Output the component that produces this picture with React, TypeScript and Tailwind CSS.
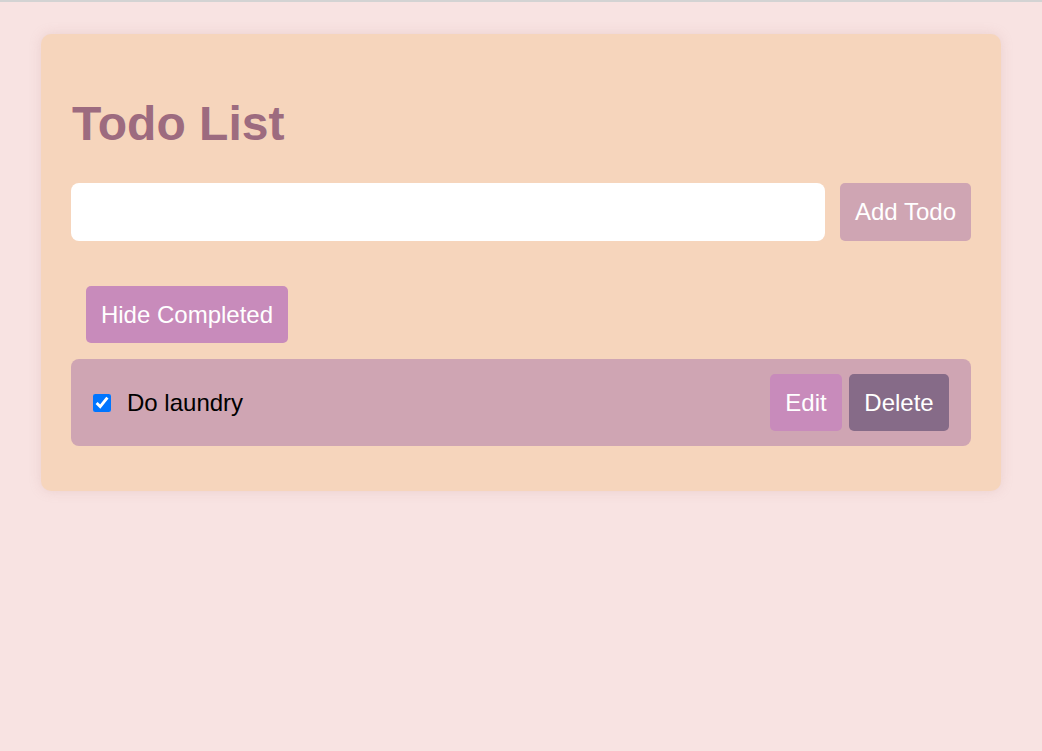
import React, { useState } from "react";

export default function App() {
  const [done, setDone] = useState(true);
  return (
    <div
      className="min-h-[751px] bg-[#f8e3e2] border-t-2 border-[#d3d3d3]"
      style={{ fontFamily: '"Liberation Sans", Arial, sans-serif' }}
    >
      <div className="pt-[32px]">
        <div className="max-w-[960px] mx-auto bg-[#f6d5bc] rounded-[10px] shadow-[0_0_12px_rgba(200,150,150,0.25)] px-[30px] pt-[30px] pb-[45px]">
          <h1 className="text-[48px] font-bold text-[#9d6b7f] leading-[55px] mt-[32px] mb-[32px] ml-[1px]">
            Todo List
          </h1>
          <div className="flex gap-[15px]">
            <input
              type="text"
              className="flex-1 h-[58px] bg-white rounded-[8px] outline-none px-3 text-[24px]"
            />
            <button className="h-[58px] w-[131px] bg-[#cfa5b3] text-white text-[24px] rounded-[5px]">
              Add Todo
            </button>
          </div>
          <div className="mt-[45px] ml-[15px] mb-[16px]">
            <button className="h-[57px] w-[202px] bg-[#c88bbb] text-white text-[24px] rounded-[5px]">
              Hide Completed
            </button>
          </div>
          <div className="flex items-center justify-between bg-[#cfa5b3] rounded-[8px] pl-[22px] pr-[22px] py-[15px]">
            <label className="flex items-center gap-[16px] text-[24px] text-black">
              <input
                type="checkbox"
                checked={done}
                onChange={() => setDone(!done)}
                className="w-[18px] h-[18px] accent-[#0075ff] m-0"
              />
              Do laundry
            </label>
            <div className="flex gap-[7px]">
              <button className="h-[57px] w-[72px] bg-[#c88bbb] text-white text-[24px] rounded-[5px]">
                Edit
              </button>
              <button className="h-[57px] w-[100px] bg-[#866b88] text-white text-[24px] rounded-[5px]">
                Delete
              </button>
            </div>
          </div>
        </div>
      </div>
    </div>
  );
}
